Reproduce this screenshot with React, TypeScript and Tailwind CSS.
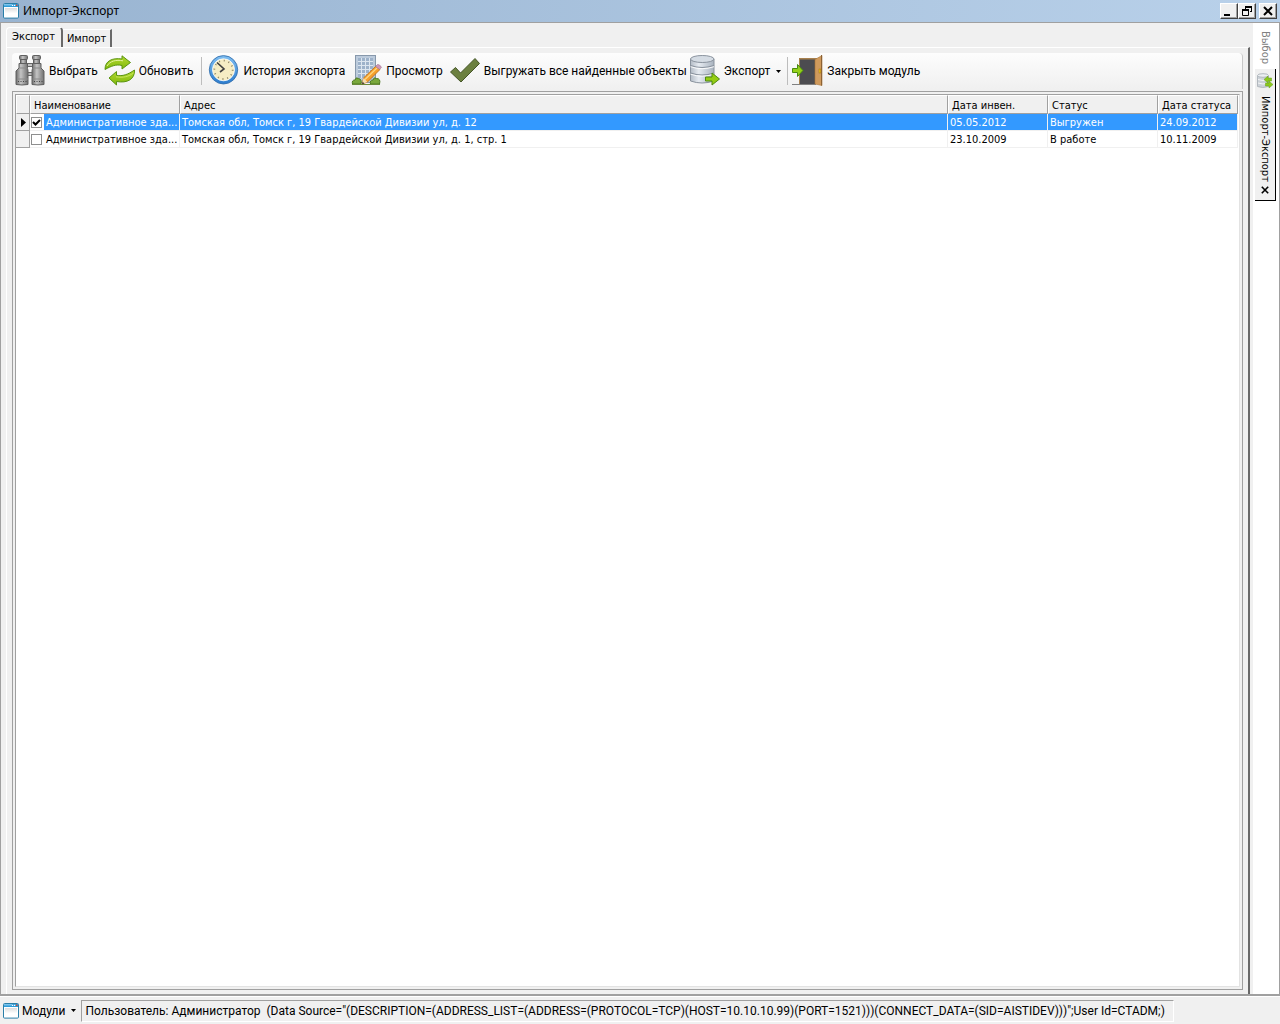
import React, { useState } from "react";

type Row = {
  id: number;
  name: string;
  address: string;
  invDate: string;
  status: string;
  statusDate: string;
};

const rows: Row[] = [
  { id: 1, name: "Административное зда...", address: "Томская обл, Томск г, 19 Гвардейской Дивизии ул, д. 12", invDate: "05.05.2012", status: "Выгружен", statusDate: "24.09.2012" },
  { id: 2, name: "Административное зда...", address: "Томская обл, Томск г, 19 Гвардейской Дивизии ул, д. 1, стр. 1", invDate: "23.10.2009", status: "В работе", statusDate: "10.11.2009" },
];

const WindowIcon = () => (
  <svg width="16" height="16" viewBox="0 0 16 16" className="shrink-0" aria-hidden="true">
    <defs>
      <linearGradient id="winBody" x1="0" y1="0" x2="0" y2="1">
        <stop offset="0" stopColor="#dcdcdc" />
        <stop offset="0.6" stopColor="#ffffff" />
      </linearGradient>
    </defs>
    <rect x="0.5" y="0.5" width="15" height="14.6" rx="1" fill="#fff" stroke="#2b7fa8" />
    <rect x="1" y="1" width="14" height="3" fill="#2f9bd8" />
    <rect x="1" y="1" width="8" height="1.5" fill="#7cc4ec" />
    <rect x="9" y="1.8" width="1.2" height="1.2" fill="#fff" />
    <rect x="11" y="1.8" width="1.2" height="1.2" fill="#fff" />
    <rect x="13" y="1.6" width="1.4" height="1.4" fill="#e8401c" />
    <rect x="2" y="5" width="12" height="9" fill="url(#winBody)" />
  </svg>
);

const BinocularsIcon = () => (
  <svg width="32" height="32" viewBox="0 0 32 32" className="shrink-0" aria-hidden="true">
    <defs>
      <linearGradient id="tube" x1="0" y1="0" x2="1" y2="0">
        <stop offset="0" stopColor="#6c6c6c" />
        <stop offset="0.4" stopColor="#c4c4c4" />
        <stop offset="1" stopColor="#707070" />
      </linearGradient>
    </defs>
    <rect x="12" y="8.5" width="8" height="3" fill="#c5c5c5" stroke="#666" />
    <rect x="13" y="17.5" width="6" height="3" fill="#bbb" stroke="#666" />
    <g stroke="#606060" fill="url(#tube)">
      <rect x="5.5" y="0.5" width="8" height="4" rx="1" />
      <rect x="18.5" y="0.5" width="8" height="4" rx="1" />
      <rect x="6.5" y="4.5" width="6" height="4" />
      <rect x="19.5" y="4.5" width="6" height="4" />
      <path d="M5 8.5h8.500v5l.5 2v14q-6 1-12 0V16l3-3z" />
      <path d="M18.500 8.500H27V13l3 3v13.500q-6 1-12 0v-14l.5-2z" />
    </g>
    <path d="M4 26.500h9M20 26.500h9" stroke="#444" strokeDasharray="1 1.500" />
    <path d="M3 24h11M18.500 24H29M5.500 13h8M19 13h8" stroke="#8a8a8a" />
  </svg>
);

const RefreshIcon = () => (
  <svg width="32" height="32" viewBox="0 0 32 32" className="shrink-0" aria-hidden="true">
    <defs>
      <linearGradient id="leaf" x1="0" y1="0" x2="0" y2="1">
        <stop offset="0" stopColor="#b4da30" />
        <stop offset="1" stopColor="#80b80c" />
      </linearGradient>
    </defs>
    <g fill="url(#leaf)" stroke="#5a9410" strokeLinejoin="round">
      <path d="M1 14.500C1 6 8 2.500 18 4V.8L26.500 7.500 18 14v-3.500C12 9 7.500 11 1 14.500z" />
      <path d="M30.500 15C31 24 23.500 28.500 12.500 26.500v3.500L5 23l7.500-6.500v3.800c6 1.200 11.500-.8 18-5.300z" />
    </g>
    <path d="M3 11C6 6 12 4.500 19 5.800" fill="none" stroke="#e2f29a" />
    <path d="M29.500 18C25 21.500 19 23 12 21.800" fill="none" stroke="#c8e65a" />
  </svg>
);

const ClockIcon = () => (
  <svg width="32" height="32" viewBox="0 0 32 32" className="shrink-0" aria-hidden="true">
    <defs>
      <linearGradient id="rim" x1="0" y1="0" x2="0" y2="1">
        <stop offset="0" stopColor="#7cbcf0" />
        <stop offset="1" stopColor="#2f7fd0" />
      </linearGradient>
    </defs>
    <circle cx="15.5" cy="14.8" r="12.6" fill="#f6edc4" stroke="url(#rim)" strokeWidth="3.2" />
    <circle cx="15.5" cy="14.8" r="14.2" fill="none" stroke="#2d6aa8" strokeWidth="0.8" />
    <circle cx="15.5" cy="14.8" r="11" fill="none" stroke="#fff" strokeWidth="0.8" />
    <circle cx="15.5" cy="14.8" r="9.2" fill="none" stroke="#8c8464" strokeWidth="1.8" strokeDasharray="1 3.817" />
    <path d="M9 7.500L16 14 12 17" fill="none" stroke="#404040" strokeWidth="1.6" />
  </svg>
);

const PreviewIcon = () => (
  <svg width="32" height="32" viewBox="0 0 32 32" className="shrink-0" aria-hidden="true">
    <rect x="4.5" y="0.5" width="20" height="27" fill="#bccbdc" stroke="#8798ab" />
    <rect x="7" y="3" width="15" height="20" fill="#9db2ca" />
    <path d="M7 6.500h15M7 10.500h15M7 14.500h15M7 18.500h15M10.500 3v20M14.500 3v20M18.500 3v20" stroke="#dce6f0" />
    <path d="M1.500 29q-1-4 2.500-4 1-3.500 3.500-1.500Q11 24 10 29zM19.500 29q-1-4 2.500-4 1-3.500 3.500-1.500 4.500 0 3 5.500z" fill="#7aa83c" stroke="#4f7a22" />
    <path d="M1 29.500h28" stroke="#6a8a3a" />
    <path d="M11 29l1.500-6L25 11l4 3.500-12.500 12.500z" fill="#f6a02c" stroke="#b86a14" strokeWidth="0.8" />
    <path d="M14 24.500L26.500 12.500" stroke="#ffd880" strokeWidth="1.2" />
    <path d="M11 29l1.500-6 4 4z" fill="#f5dcb0" />
    <path d="M11 29.300l.7-2.500 1.700 1.600z" fill="#333" />
    <path d="M24.500 11.500l2-2q2-.5 4 2.800l-2 2.200z" fill="#cf96b8" stroke="#9a6d8c" strokeWidth="0.6" />
  </svg>
);

const CheckIcon = () => (
  <svg width="32" height="32" viewBox="0 0 32 32" className="shrink-0" aria-hidden="true">
    <path d="M1.500 17l5-4.500 5 5.500L26 3.500l4.500 5L12 27z" fill="#6c8040" stroke="#465628" strokeLinejoin="round" />
  </svg>
);

const DatabaseIcon = () => (
  <svg width="32" height="32" viewBox="0 0 32 32" className="shrink-0" aria-hidden="true">
    <defs>
      <linearGradient id="disk" x1="0" y1="0" x2="1" y2="0">
        <stop offset="0" stopColor="#b4bcc6" />
        <stop offset="0.35" stopColor="#e6ebf1" />
        <stop offset="1" stopColor="#a9b3bf" />
      </linearGradient>
    </defs>
    <path d="M1.500 4v22q11.500 4 23.500 0V4z" fill="url(#disk)" stroke="#8a939e" />
    <ellipse cx="13.25" cy="4" rx="11.75" ry="3.5" fill="#d5dce4" stroke="#8a939e" />
    <path d="M1.500 10.500q11.500 4 23.500 0M1.500 18q11.500 4 23.500 0" fill="none" stroke="#8a939e" strokeWidth="1.2" />
    <path d="M1.500 11.700q11.500 4 23.500 0M1.500 19.200q11.500 4 23.500 0" fill="none" stroke="#fff" strokeWidth="0.9" />
    <path d="M16.500 22h6.500v-4l7.500 6-7.500 6v-4h-6.500z" fill="#94cc14" stroke="#4f8a10" />
  </svg>
);

const DoorIcon = () => (
  <svg width="32" height="32" viewBox="0 0 32 32" className="shrink-0" aria-hidden="true">
    <path d="M7 3h18v26H7z" fill="#a8814e" />
    <path d="M8 4.500h15V29H8z" fill="#4c4c50" />
    <path d="M0 29.500h24" stroke="#808080" />
    <path d="M23 4.500L30 .5v30l-7-1.500z" fill="#d09a5c" stroke="#a87438" strokeWidth="0.6" />
    <path d="M29.500 0v30.500" stroke="#8c6234" />
    <rect x="27" y="14" width="1.8" height="4" fill="#f0c020" stroke="#a07810" strokeWidth="0.5" />
    <path d="M.5 13.500h5v-4l5.500 6-5.500 6v-4h-5z" fill="#94d018" stroke="#4a8a10" />
  </svg>
);

const ExchangeIcon = () => (
  <svg width="16" height="16" viewBox="0 0 16 16" className="shrink-0" aria-hidden="true">
    <path d="M.5 2.500v11q5 2 11 0v-11z" fill="#ccd2d8" stroke="#b2b8be" />
    <ellipse cx="6" cy="2.5" rx="5.5" ry="1.8" fill="#eceff2" stroke="#b2b8be" />
    <path d="M1 6.500q5 2 10 0M1 10q5 2 10 0" fill="none" stroke="#f6f6f6" />
    <path d="M7 6.500l4-3.500v2h3.500v3H11v2z" fill="#8cc81c" stroke="#62a018" strokeWidth="0.5" />
    <path d="M16 11.500L12 8v2H8.500v3H12v2z" fill="#8cc81c" stroke="#62a018" strokeWidth="0.5" />
  </svg>
);

const CaretIcon = () => (
  <svg width="5" height="3" viewBox="0 0 5 3" className="shrink-0" aria-hidden="true">
    <path d="M0 0h5L2.500 3z" fill="#000" />
  </svg>
);

const CloseIcon = ({ size }: { size: number }) => (
  <svg width={size} height={size} viewBox="0 0 10 10" aria-hidden="true">
    <path d="M1 1l8 8M9 1L1 9" stroke="#000" strokeWidth="2" />
  </svg>
);

const ToolButton = ({ icon, label, className }: { icon: React.ReactNode; label: string; className?: string }) => (
  <button type="button" className={`flex items-center whitespace-nowrap ${className ?? ""}`}>
    {icon}
    <span className="ml-[3px]">{label}</span>
  </button>
);

const CaptionButton = ({ label, children, className }: { label: string; children: React.ReactNode; className?: string }) => (
  <button
    type="button"
    aria-label={label}
    className={`flex h-4 w-[18px] items-center justify-center border border-t-white border-r-[#404040] border-b-[#404040] border-l-white bg-[#f0f0f0] shadow-[inset_-1px_-1px_0_#a0a0a0] ${className ?? ""}`}
  >
    {children}
  </button>
);

const Separator = () => <div className="h-7 w-px shrink-0 bg-[#bdbdbd]" />;

const App = () => {
  const [checked, setChecked] = useState<number[]>([1]);
  const [selected, setSelected] = useState(1);

  const toggle = (id: number) => {
    setChecked((prev) => (prev.includes(id) ? prev.filter((item) => item !== id) : [...prev, id]));
  };

  const headCell = "overflow-hidden border-t border-r border-b border-l border-t-white border-r-[#a0a0a0] border-b-[#a0a0a0] border-l-white bg-[#f0f0f0] px-[3px] pt-0.5 text-left leading-[14px] font-normal whitespace-nowrap";
  const cell = "truncate border-r border-b border-[#f0f0f0] px-0.5 pt-0.5 leading-[14px]";

  return (
    <div className="flex h-screen flex-col overflow-hidden bg-[#f0f0f0] font-[Roboto,sans-serif] text-xs text-black">
      {/* Title bar */}
      <header className="flex h-[22px] shrink-0 items-center bg-linear-to-r from-[#99b4d1] to-[#b9d1ea] pr-[3px] pl-[3px]">
        <WindowIcon />
        <h1 className="ml-1 flex-1 font-['Noto_Sans',sans-serif]">Импорт-Экспорт</h1>
        <CaptionButton label="Свернуть">
          <span className="mt-2 mr-1 h-0.5 w-1.5 bg-black" />
        </CaptionButton>
        <CaptionButton label="Восстановить">
          <svg width="11" height="10" viewBox="0 0 11 10" aria-hidden="true">
            <path d="M3.500 3V1M3 1h7M9.500 1v5M10 5.500H8M.5 4v5.500h6V4" fill="none" stroke="#000" />
            <path d="M3 1h7M0 4h7" stroke="#000" strokeWidth="2" />
          </svg>
        </CaptionButton>
        <CaptionButton label="Закрыть" className="ml-[3px]">
          <CloseIcon size={10} />
        </CaptionButton>
      </header>

      <div className="flex min-h-0 flex-1 border-t border-r border-b-2 border-l border-[#a0a0a0] bg-[#f0f0f0]">
        {/* Module area */}
        <main className="flex min-w-0 flex-1 flex-col pt-1 pl-[5px]">
          <nav className="flex h-5 items-end font-['DejaVu_Sans_Condensed',sans-serif] text-[11px]" role="tablist">
            <button type="button" role="tab" aria-selected="true" className="flex h-5 items-start rounded-t-sm border-t border-r-2 border-l border-t-white border-r-[#696969] border-l-white pt-0.5 pr-1.5 pl-[5px]">
              Экспорт
            </button>
            <button type="button" role="tab" aria-selected="false" className="flex h-[18px] items-end border-t border-r-2 border-t-white border-r-[#696969] px-1">
              Импорт
            </button>
          </nav>
          <div className="flex min-h-0 flex-1 flex-col border-t border-r-2 border-l border-t-white border-r-[#696969] border-l-white px-[5px] pt-[5px] pb-1">
            <div className="flex h-9 shrink-0 items-center rounded-t-sm border-r border-[#c8c8c8] bg-linear-to-b from-[#fdfdfd] to-[#f0f0f0] pl-0.5" role="toolbar">
              <ToolButton icon={<BinocularsIcon />} label="Выбрать" />
              <ToolButton icon={<RefreshIcon />} label="Обновить" className="mr-2 ml-1.5" />
              <Separator />
              <ToolButton icon={<ClockIcon />} label="История экспорта" className="ml-1.5" />
              <ToolButton icon={<PreviewIcon />} label="Просмотр" className="ml-1.5" />
              <ToolButton icon={<CheckIcon />} label="Выгружать все найденные объекты" className="ml-1.5" />
              <ToolButton icon={<DatabaseIcon />} label="Экспорт" className="ml-0.5" />
              <button type="button" aria-label="Варианты экспорта" className="px-1.5">
                <CaretIcon />
              </button>
              <Separator />
              <ToolButton icon={<DoorIcon />} label="Закрыть модуль" className="ml-1" />
            </div>

            <div className="mt-0.5 min-h-0 flex-1 border border-[#a0a0a0] p-0.5">
              <div className="h-full border border-t-[#a0a0a0] border-r-[#e3e3e3] border-b-[#e3e3e3] border-l-[#a0a0a0] bg-white pr-px">
                <table className="w-full table-fixed border-separate border-spacing-0 font-['DejaVu_Sans_Condensed',sans-serif] text-[11px] leading-4">
                  <colgroup>
                    <col className="w-3.5" />
                    <col className="w-[150px]" />
                    <col />
                    <col className="w-[100px]" />
                    <col className="w-[110px]" />
                    <col className="w-20" />
                  </colgroup>
                  <thead>
                    <tr className="h-[19px]">
                      <th className={headCell} aria-label="Строка"></th>
                      <th className={headCell}>Наименование</th>
                      <th className={headCell}>Адрес</th>
                      <th className={headCell}>Дата инвен.</th>
                      <th className={headCell}>Статус</th>
                      <th className={headCell}>Дата статуса</th>
                    </tr>
                  </thead>
                  <tbody>
                    {rows.map((row) => (
                      <tr key={row.id} className={`h-[17px] ${row.id === selected ? "bg-[#3399ff] text-white" : ""}`} onClick={() => setSelected(row.id)}>
                        <td className="border-r border-b border-[#a0a0a0] bg-[#f0f0f0] p-0">
                          {row.id === selected && (
                            <svg width="5" height="9" viewBox="0 0 5 9" className="ml-[5px]" aria-hidden="true">
                              <path d="M0 0l5 4.500L0 9z" fill="#000" />
                            </svg>
                          )}
                        </td>
                        <td className="border-r border-b border-[#f0f0f0] p-0">
                          <div className="flex items-center">
                            <span className="flex h-4 items-center bg-white pr-0.5 pl-px">
                              <span className="relative flex h-[11px] w-[11px]">
                                <input
                                  type="checkbox"
                                  aria-label={row.address}
                                  checked={checked.includes(row.id)}
                                  onChange={() => toggle(row.id)}
                                  className="h-[11px] w-[11px] appearance-none border border-[#8e8f8f] bg-white"
                                />
                                {checked.includes(row.id) && (
                                  <svg width="11" height="11" viewBox="0 0 11 11" className="pointer-events-none absolute inset-0" aria-hidden="true">
                                    <path d="M2 5l2.500 2.500L9 3" fill="none" stroke="#000" strokeWidth="2" />
                                  </svg>
                                )}
                              </span>
                            </span>
                            <span className="ml-0.5 pt-0.5 leading-[14px] whitespace-nowrap">{row.name}</span>
                          </div>
                        </td>
                        <td className={cell}>{row.address}</td>
                        <td className={cell}>{row.invDate}</td>
                        <td className={cell}>{row.status}</td>
                        <td className={cell}>{row.statusDate}</td>
                      </tr>
                    ))}
                  </tbody>
                </table>
              </div>
            </div>
          </div>
        </main>

        {/* Open modules */}
        <aside className="ml-[3px] flex w-[26px] shrink-0 flex-col bg-white pl-0.5 font-['DejaVu_Sans_Condensed',sans-serif] text-[11px]">
          <button type="button" className="flex h-[46px] w-5 items-center justify-start pt-2 text-[#808080] [writing-mode:vertical-rl]">
            Выбор
          </button>
          <div className="flex w-[21px] flex-col items-center border-r border-b border-black bg-[#f0f0f0] pt-1 pb-1.5">
            <button type="button" className="flex flex-col items-center gap-[7px]">
              <ExchangeIcon />
              <span className="[writing-mode:vertical-rl]">Импорт-Экспорт</span>
            </button>
            <button type="button" aria-label="Закрыть вкладку" className="mt-1">
              <CloseIcon size={8} />
            </button>
          </div>
        </aside>
      </div>

      {/* Status bar */}
      <footer className="flex h-7 shrink-0 items-center border-t border-white pl-[3px]">
        <button type="button" className="flex items-center">
          <WindowIcon />
          <span className="mr-1.5 ml-[3px]">Модули</span>
          <CaretIcon />
        </button>
        <p className="ml-[5px] flex h-[22px] items-center border border-t-[#a0a0a0] border-r-white border-b-white border-l-[#a0a0a0] pr-2 pl-[3px] whitespace-pre">
          {'Пользователь: Администратор  (Data Source="(DESCRIPTION=(ADDRESS_LIST=(ADDRESS=(PROTOCOL=TCP)(HOST=10.10.10.99)(PORT=1521)))(CONNECT_DATA=(SID=AISTIDEV)))";User Id=CTADM;)'}
        </p>
      </footer>
    </div>
  );
};

export default App;
